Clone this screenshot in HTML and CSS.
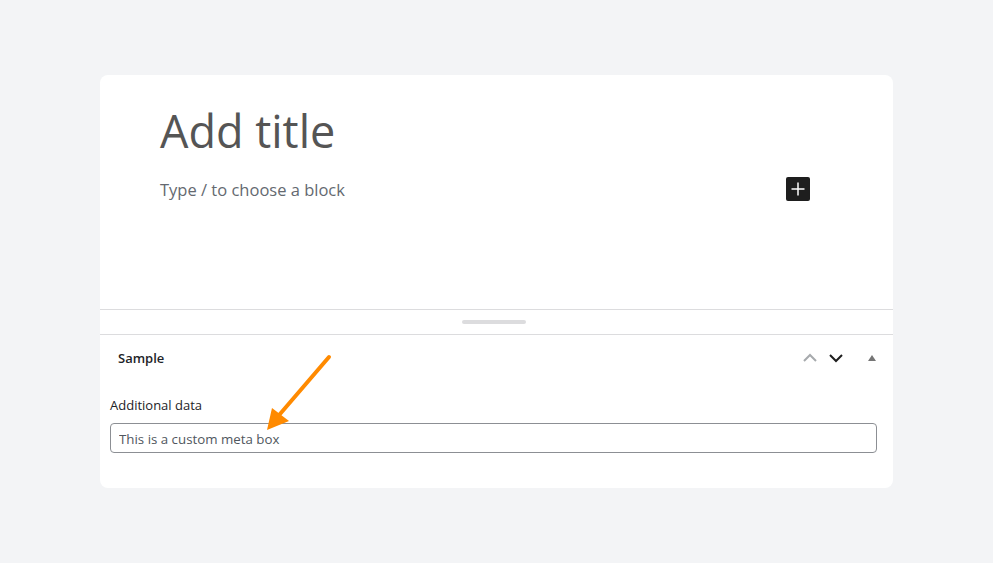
FILE: index.html
```html
<!DOCTYPE html>
<html>
<head>
  <meta name="viewport" content="width=device-width, initial-scale=1">
  <link rel="stylesheet" href="styles.css">
</head>
<body>

  <div class="editor">
    <div class="canvas">
      <h1 class="post-title">Add title</h1>
      <div class="block-row">
        <p class="placeholder">Type / to choose a block</p>
        <button class="inserter" aria-label="Add block">
          <svg width="24" height="24" viewBox="0 0 24 24"><path d="M11.25 5.5h1.5v5.75h5.75v1.5h-5.75v5.75h-1.5v-5.75H5.5v-1.5h5.75z" fill="#fff"/></svg>
        </button>
      </div>
    </div>

    <!-- Resize handle between canvas and meta boxes -->
    <div class="resize-bar"><span class="handle"></span></div>

    <div class="metabox">
      <div class="metabox-header">
        <h2>Sample</h2>
        <div class="metabox-actions">
          <svg class="move-up" width="18" height="18" viewBox="0 0 18 18"><path d="M3 12l6-6 6 6" fill="none" stroke="#a7aaad" stroke-width="2"/></svg>
          <svg class="move-down" width="18" height="18" viewBox="0 0 18 18"><path d="M3 6l6 6 6-6" fill="none" stroke="#1e1e1e" stroke-width="2"/></svg>
          <svg class="toggle" width="18" height="18" viewBox="0 0 18 18"><path d="M5 12h8L9 6z" fill="#757575"/></svg>
        </div>
      </div>
      <div class="metabox-body">
        <label for="additional">Additional data</label>
        <input type="text" id="additional" value="This is a custom meta box">
      </div>
    </div>

    <!-- Annotation arrow -->
    <svg class="callout" width="80" height="90" viewBox="0 0 80 90">
      <path d="M69 8L14 72" stroke="#ff8a00" stroke-width="4" stroke-linecap="round" fill="none"/>
      <path d="M7 81l5-22 17 13z" fill="#ff8a00"/>
    </svg>
  </div>

</body>
</html>
```

FILE: styles.css
```css
/* Base styling */
body {
  margin: 0;
  padding: 75px 100px;
  background: #f3f4f6;
  font-family: "Open Sans", "Noto Sans", sans-serif;
}
.editor {
  position: relative;
  background: #fff;
  border-radius: 8px;
  overflow: hidden;
}
/* Post canvas */
.canvas {
  height: 234px;
  padding: 0 83px 0 60px;
  box-sizing: border-box;
}
.post-title {
  margin: 0;
  padding-top: 26px;
  font-size: 45px;
  font-weight: 400;
  line-height: 60px;
  color: #555;
}
.block-row {
  display: flex;
  align-items: center;
  justify-content: space-between;
  margin-top: 16px;
}
.placeholder {
  margin: 0;
  font-size: 16.5px;
  color: #646970;
}
.inserter {
  width: 24px;
  height: 24px;
  padding: 0;
  border: 0;
  border-radius: 2px;
  background: #1e1e1e;
  display: flex;
  align-items: center;
  justify-content: center;
}
/* Resize bar */
.resize-bar {
  height: 24px;
  border-top: 1px solid #dcdcde;
  border-bottom: 1px solid #dcdcde;
  display: flex;
  align-items: center;
  justify-content: center;
}
.handle {
  width: 64px;
  height: 4px;
  margin-right: 6px;
  border-radius: 2px;
  background: #dcdcde;
}
/* Meta box */
.metabox-header {
  display: flex;
  align-items: center;
  justify-content: space-between;
  height: 46px;
  padding: 0 12px 0 18px;
}
.metabox-header h2 {
  margin: 0;
  font-size: 13px;
  font-weight: 600;
  color: #1d2327;
}
.metabox-actions {
  display: flex;
  align-items: center;
  gap: 8px;
}
.metabox-actions .toggle {
  margin-left: 10px;
}
.metabox-body {
  padding: 15px 16px 35px 10px;
}
.metabox-body label {
  display: block;
  font-size: 13px;
  color: #1d2327;
  margin-bottom: 9px;
}
.metabox-body input {
  display: block;
  width: 100%;
  box-sizing: border-box;
  height: 30px;
  padding: 1px 8px 0;
  border: 1px solid #8c8f94;
  border-radius: 4px;
  font-family: inherit;
  font-size: 13.3px;
  color: #50575e;
}
/* Arrow drawn over the meta box */
.callout {
  position: absolute;
  left: 160px;
  top: 274px;
}
```
